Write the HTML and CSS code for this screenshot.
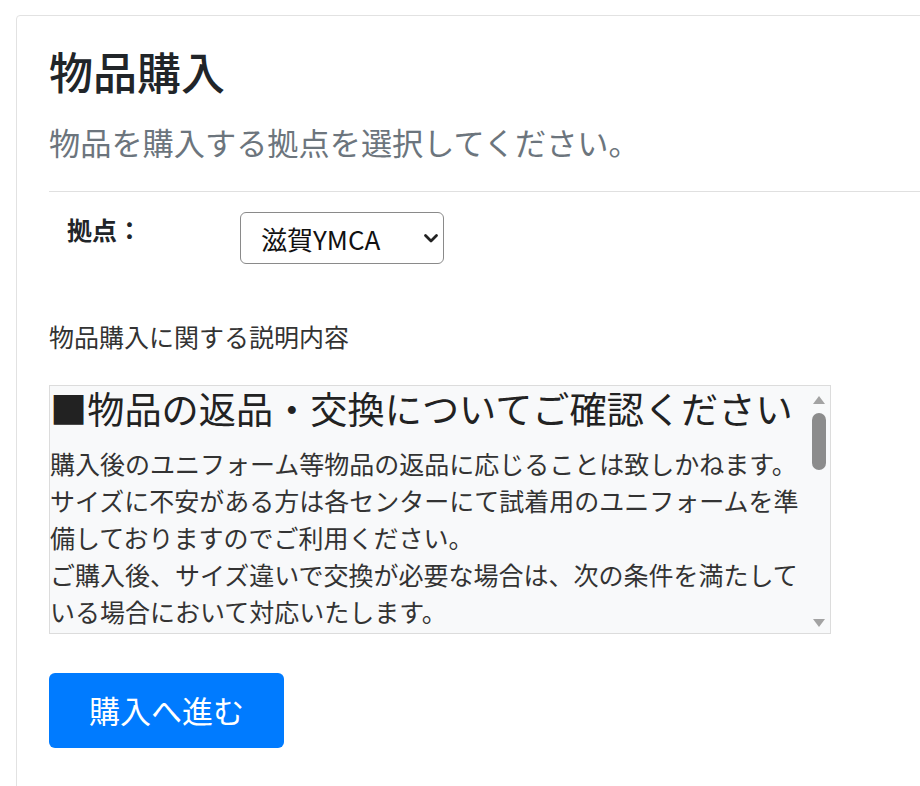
FILE: index.html
```html
<!DOCTYPE html>
<html lang="ja">

<head>
  <meta charset="utf-8">
  <title>物品購入</title>
  <link rel="stylesheet" href="styles.css">
</head>

<body>
  <div class="card">
    <h1 class="title">物品購入</h1>
    <p class="lead">物品を購入する拠点を選択してください。</p>
    <hr>
    <form class="purchase-form">
      <div class="form-row">
        <label class="form-label" for="base">拠点：</label>
        <div class="select-wrap">
          <select id="base" class="base-select">
            <option>滋賀YMCA</option>
            <option>京都YMCA</option>
            <option>大阪YMCA</option>
          </select>
          <svg class="select-arrow" viewBox="0 0 16 16" width="16" height="16">
            <path d="M2.5 5.5 8 11l5.5-5.5" fill="none" stroke="#222" stroke-width="2.8" stroke-linecap="round" stroke-linejoin="round"/>
          </svg>
        </div>
      </div>

      <p class="desc-label">物品購入に関する説明内容</p>

      <div class="notice">
        <div class="notice-body">
          <h2 class="notice-title">■物品の返品・交換についてご確認ください</h2>
          <p>購入後のユニフォーム等物品の返品に応じることは致しかねます。</p>
          <p>サイズに不安がある方は各センターにて試着用のユニフォームを準備しておりますのでご利用ください。</p>
          <p>ご購入後、サイズ違いで交換が必要な場合は、次の条件を満たしている場合において対応いたします。</p>
          <p>・商品到着後、1週間以内にお申し出いただいた場合</p>
          <p>・未使用かつ名前の記入がない場合</p>
          <p>・タグ、袋などが購入時の状態である場合</p>
        </div>
        <div class="scrollbar">
          <span class="arrow-up"></span>
          <span class="thumb"></span>
          <span class="arrow-down"></span>
        </div>
      </div>

      <button type="button" class="btn-primary">購入へ進む</button>
    </form>
  </div>
</body>

</html>
```

FILE: styles.css
```css
*, *::before, *::after {
  box-sizing: border-box;
}
body {
  margin: 0;
  padding: 15px 0 0 16px;
  background: #fff;
  color: #212529;
  font-family: "Noto Sans CJK JP", "Noto Sans", sans-serif;
  overflow: hidden;
}

.card {
  margin-right: -40px;
  padding: 29px 32px 40px;
  border: 1px solid #e2e2e2;
  border-radius: 4px;
  min-height: 800px;
}

.title {
  margin: 0 0 21px;
  font-size: 44px;
  font-weight: 500;
  line-height: 1.2;
}

.lead {
  margin: 0;
  font-size: 31.2px;
  line-height: 1.45;
  color: #6c757d;
}

hr {
  margin: 27px 0 0;
  border: 0;
  border-top: 1px solid #e0e0e0;
}

.form-row {
  display: flex;
  align-items: flex-start;
  margin-top: 19px;
}
.form-label {
  width: 191px;
  padding-left: 18px;
  font-size: 25px;
  font-weight: 700;
  line-height: 36px;
}

.select-wrap {
  position: relative;
  margin-top: 1px;
}
.base-select {
  appearance: none;
  width: 204px;
  height: 52px;
  padding: 0 40px 0 20px;
  font: inherit;
  font-size: 26px;
  color: #111;
  background: #fff;
  border: 1px solid #8a8a8a;
  border-radius: 6px;
}
.select-arrow {
  position: absolute;
  right: 5px;
  top: 18px;
  pointer-events: none;
}

.desc-label {
  margin: 54px 0 0;
  font-size: 25px;
  line-height: 1.5;
  color: #333;
}

.notice {
  display: flex;
  width: 782px;
  height: 249px;
  margin-top: 29px;
  background: #f8f9fa;
  border: 1px solid #dcdcdc;
  color: #333;
}
.notice-body {
  flex: 1;
  overflow: hidden;
}
.notice-title {
  margin: 0 0 15px;
  font-size: 37.2px;
  font-weight: 400;
  line-height: 44px;
  color: #222;
}
.notice p {
  margin: 0;
  font-size: 25px;
  line-height: 37px;
}

.scrollbar {
  display: flex;
  flex-direction: column;
  align-items: center;
  width: 22px;
  padding: 10px 0 6px;
}
.arrow-up, .arrow-down {
  width: 0;
  height: 0;
  border-left: 6px solid transparent;
  border-right: 6px solid transparent;
}
.arrow-up {
  border-bottom: 8px solid #a3a3a3;
}
.arrow-down {
  margin-top: auto;
  border-top: 8px solid #a3a3a3;
}
.thumb {
  width: 14px;
  height: 57px;
  margin-top: 9px;
  background: #8c8c8c;
  border-radius: 7px;
}

.btn-primary {
  display: block;
  margin-top: 39px;
  width: 235px;
  height: 75px;
  font: inherit;
  font-size: 31px;
  line-height: 1.2;
  color: #fff;
  background: #007bff;
  border: 0;
  border-radius: 6px;
  cursor: pointer;
}
.btn-primary:hover {
  background: #0069d9;
}
```
